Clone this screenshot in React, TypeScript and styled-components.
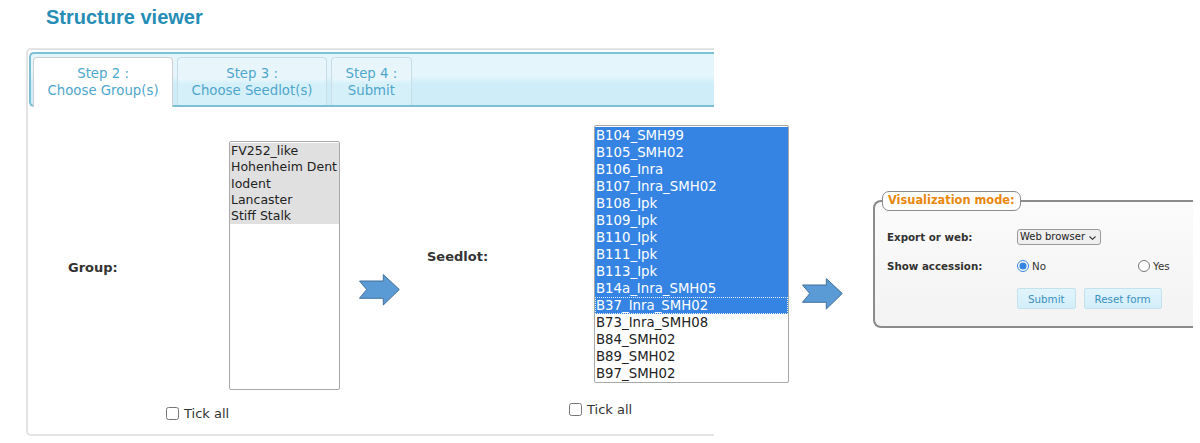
import styled, { createGlobalStyle } from "styled-components";

const GlobalStyle = createGlobalStyle`
  body {
    margin: 0;
    background: #fff;
    font-family: "DejaVu Sans", Verdana, sans-serif;
    color: #222;
  }
`;

const Title = styled.h1`
  margin: 6px 0 0 46px;
  font-family: "Liberation Sans", Arial, sans-serif;
  font-size: 20px;
  line-height: 23px;
  font-weight: bold;
  color: #258db6;
`;

const Panel = styled.div`
  box-sizing: border-box;
  width: 688px;
  height: 388px;
  margin: 19px 0 0 26px;
  border: 2px solid #e4e4e4;
  border-right: 0;
  border-radius: 5px 0 0 5px;
`;

const TabBar = styled.div`
  box-sizing: border-box;
  display: flex;
  gap: 4px;
  height: 55px;
  margin: 2px 0 0 1px;
  padding: 3px 0 0 2px;
  border: 2px solid #7cc0d6;
  border-right: 0;
  border-radius: 5px 0 0 5px;
  background: linear-gradient(#e4f5fc 0%, #e4f5fc 42%, #ceedf9 58%, #ceedf9 100%);
`;

const Tab = styled.div<{ $active?: boolean }>`
  box-sizing: border-box;
  height: ${(p) => (p.$active ? "50px" : "48px")};
  margin-bottom: ${(p) => (p.$active ? "-2px" : "0")};
  padding: 7px 13.5px 0;
  font-size: 13.3px;
  line-height: 17px;
  text-align: center;
  white-space: nowrap;
  color: #4fa6cc;
  border: 1px solid ${(p) => (p.$active ? "#cfcfcf" : "#c8dde6")};
  border-bottom: 0;
  border-radius: 4px 4px 0 0;
  background: ${(p) =>
    p.$active
      ? "#fff"
      : "linear-gradient(#e8f6fc 0%, #e8f6fc 45%, #d6f0fa 55%, #d6f0fa 100%)"};
  position: relative;
  z-index: ${(p) => (p.$active ? 1 : 0)};
`;

const Content = styled.div`
  display: grid;
  grid-template-columns: 201px 111px 87px 167px 195px 84px 320px;
  align-items: start;
`;

const FieldName = styled.div<{ $top: number; $left?: number }>`
  margin: ${(p) => p.$top}px 0 0 ${(p) => p.$left ?? 0}px;
  font-size: 13px;
  line-height: 16px;
  font-weight: bold;
  color: #333;
`;

const ListBox = styled.div<{ $top: number; $width: number; $height: number }>`
  box-sizing: border-box;
  width: ${(p) => p.$width}px;
  height: ${(p) => p.$height}px;
  margin-top: ${(p) => p.$top}px;
  padding: 1px 0;
  border: 1px solid #a9a9a9;
  border-radius: 2px;
  background: #fff;
  overflow: hidden;
`;

const Option = styled.div<{
  $state?: "idle" | "dim" | "selected";
  $size: number;
  $line: number;
  $focus?: boolean;
}>`
  height: ${(p) => p.$line}px;
  padding-left: 1px;
  font-size: ${(p) => p.$size}px;
  line-height: ${(p) => p.$line}px;
  white-space: nowrap;
  color: ${(p) => (p.$state === "selected" ? "#fff" : "#222")};
  background: ${(p) =>
    p.$state === "selected" ? "#3584e4" : p.$state === "dim" ? "#e0e0e0" : "transparent"};
  outline: ${(p) => (p.$focus ? "1px dotted rgba(255,255,255,0.85)" : "none")};
  outline-offset: -1px;
`;

const ArrowBox = styled.div<{ $top: number; $left: number }>`
  margin: ${(p) => p.$top}px 0 0 ${(p) => p.$left}px;
  width: 41px;
  height: 32px;
`;

const TickAll = styled.label<{ $col: number; $top: number; $left: number }>`
  grid-row: 2;
  grid-column: ${(p) => p.$col};
  display: flex;
  align-items: center;
  gap: 5px;
  height: 17px;
  margin: ${(p) => p.$top}px 0 0 ${(p) => p.$left}px;
  font-size: 13px;
  white-space: nowrap;
  color: #333;

  input {
    margin: 0;
    width: 13px;
    height: 13px;
  }
`;

const ModeFieldset = styled.fieldset`
  grid-row: 1;
  grid-column: 7;
  box-sizing: border-box;
  width: 320px;
  min-width: 0;
  margin: 84px 0 0;
  padding: 17px 0 17px 12px;
  border: 2px solid #8b8b8b;
  border-right: 0;
  border-radius: 8px 0 0 8px;
  background: linear-gradient(#fbfbfb, #f3f3f3);
  font-size: 10.3px;
`;

const Legend = styled.legend`
  box-sizing: border-box;
  height: 20px;
  margin-left: -5px;
  padding: 0 5px;
  line-height: 17px;
  font-size: 11.4px;
  border: 1.5px solid #8b8b8b;
  border-radius: 7px;
  background: #fff;
  color: #e8870e;
  font-weight: bold;
`;

const FormRow = styled.div<{ $top: number; $height: number }>`
  display: flex;
  align-items: center;
  height: ${(p) => p.$height}px;
  margin-top: ${(p) => p.$top}px;
`;

const FormLabel = styled.div`
  width: 130px;
  flex: none;
  font-weight: bold;
  color: #333;
`;

const SelectWrap = styled.span`
  position: relative;
  display: inline-flex;
  flex: none;

  svg {
    position: absolute;
    right: 5px;
    top: 7px;
    pointer-events: none;
  }
`;

const ModeSelect = styled.select`
  box-sizing: border-box;
  appearance: none;
  width: 84px;
  height: 16px;
  padding: 0 0 0 2px;
  font-family: "DejaVu Sans", Verdana, sans-serif;
  font-size: 10px;
  line-height: 14px;
  color: #222;
  background: #efefef;
  border: 1px solid #9a9a9a;
  border-radius: 3px;
`;

const RadioOption = styled.label`
  display: flex;
  flex: none;
  align-items: center;
  gap: 3px;
  width: 121px;
  color: #333;

  input {
    margin: 0;
    width: 12px;
    height: 12px;
    accent-color: #3584e4;
  }
`;

const ActionButton = styled.button`
  box-sizing: border-box;
  flex: none;
  height: 21px;
  margin-right: 8px;
  padding: 0 10px;
  font-family: "DejaVu Sans", Verdana, sans-serif;
  font-size: 10.3px;
  color: #3b90c2;
  background: linear-gradient(#e2f4fc, #d3eef9);
  border: 1px solid #c3e2ee;
  border-radius: 2px;
`;

const Arrow = ({ top, left }: { top: number; left: number }) => (
  <ArrowBox $top={top} $left={left}>
    <svg width="41" height="32" viewBox="0 0 41 32">
      <polygon
        points="0.5,7 24.3,7 24.3,0.6 40.3,15.5 24.3,31 24.3,24.3 0.5,24.3 7.7,15.5"
        fill="#5b9bd5"
        stroke="#41719c"
        strokeWidth="1"
      />
    </svg>
  </ArrowBox>
);

const groups = ["FV252_like", "Hohenheim Dent", "Iodent", "Lancaster", "Stiff Stalk"];

const seedlots = [
  "B104_SMH99",
  "B105_SMH02",
  "B106_Inra",
  "B107_Inra_SMH02",
  "B108_Ipk",
  "B109_Ipk",
  "B110_Ipk",
  "B111_Ipk",
  "B113_Ipk",
  "B14a_Inra_SMH05",
  "B37_Inra_SMH02",
  "B73_Inra_SMH08",
  "B84_SMH02",
  "B89_SMH02",
  "B97_SMH02",
];

function App() {
  return (
    <>
      <GlobalStyle />
      <Title>Structure viewer</Title>
      <Panel>
        <TabBar>
          <Tab $active>
            Step 2 :<br />
            Choose Group(s)
          </Tab>
          <Tab>
            Step 3 :<br />
            Choose Seedlot(s)
          </Tab>
          <Tab>
            Step 4 :<br />
            Submit
          </Tab>
        </TabBar>
        <Content>
          <FieldName $top={153} $left={40}>
            Group:
          </FieldName>
          <ListBox $top={34} $width={111} $height={249}>
            {groups.map((g) => (
              <Option key={g} $state="dim" $size={12.5} $line={16.25}>
                {g}
              </Option>
            ))}
          </ListBox>
          <Arrow top={167} left={19} />
          <FieldName $top={142}>Seedlot:</FieldName>
          <ListBox $top={18} $width={195} $height={258}>
            {seedlots.map((s, i) => (
              <Option
                key={s}
                $state={i <= 10 ? "selected" : "idle"}
                $focus={i === 10}
                $size={13.3}
                $line={17}
              >
                {s}
              </Option>
            ))}
          </ListBox>
          <Arrow top={171} left={13} />
          <ModeFieldset>
            <Legend>Visualization mode:</Legend>
            <FormRow $top={0} $height={18}>
              <FormLabel>Export or web:</FormLabel>
              <SelectWrap>
                <ModeSelect defaultValue="web">
                  <option value="web">Web browser</option>
                  <option value="export">Export</option>
                </ModeSelect>
                <svg width="7" height="4" viewBox="0 0 7 4">
                  <path d="M0.5 0.5 L3.5 3.3 L6.5 0.5" fill="none" stroke="#333" strokeWidth="1.1" />
                </svg>
              </SelectWrap>
            </FormRow>
            <FormRow $top={11} $height={18}>
              <FormLabel>Show accession:</FormLabel>
              <RadioOption>
                <input type="radio" name="accession" defaultChecked />
                No
              </RadioOption>
              <RadioOption>
                <input type="radio" name="accession" />
                Yes
              </RadioOption>
            </FormRow>
            <FormRow $top={13} $height={21}>
              <FormLabel />
              <ActionButton>Submit</ActionButton>
              <ActionButton>Reset form</ActionButton>
            </FormRow>
          </ModeFieldset>
          <TickAll $col={1} $top={15} $left={138}>
            <input type="checkbox" />
            Tick all
          </TickAll>
          <TickAll $col={4} $top={11} $left={142}>
            <input type="checkbox" />
            Tick all
          </TickAll>
        </Content>
      </Panel>
    </>
  );
}

export default App;
